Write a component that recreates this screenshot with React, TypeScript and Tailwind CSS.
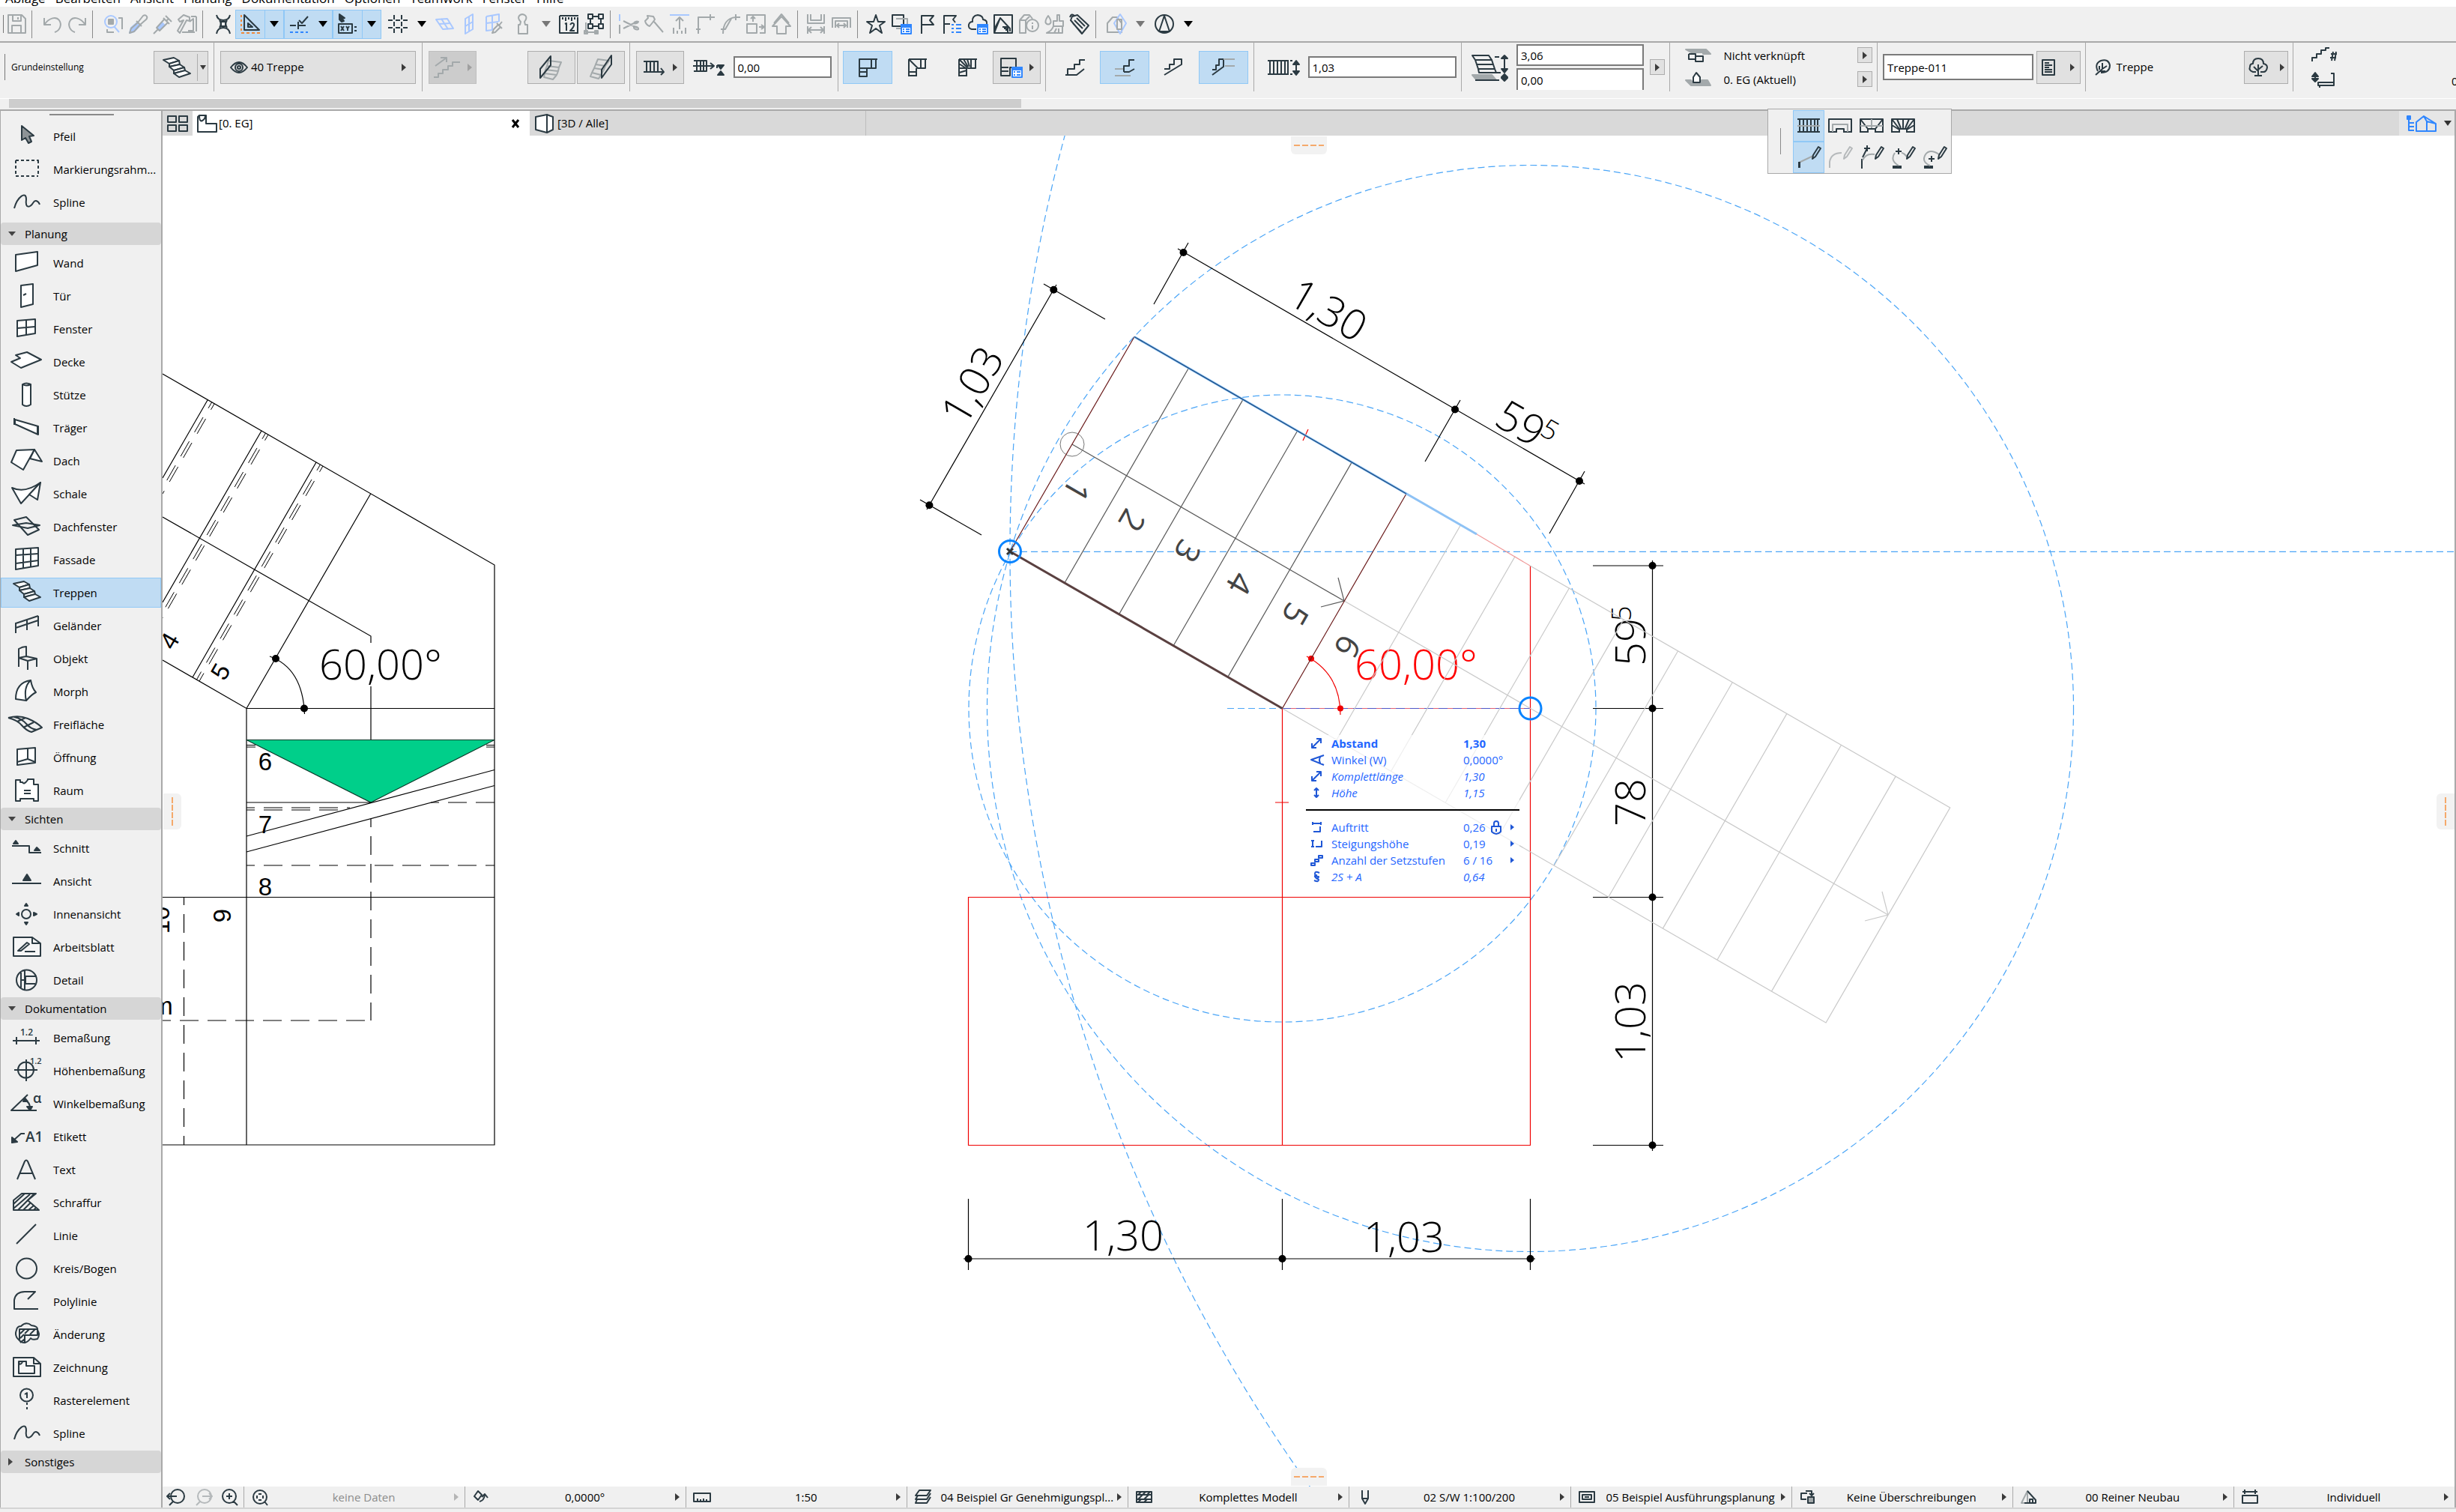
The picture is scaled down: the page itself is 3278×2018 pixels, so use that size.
import React from "react";

const DARK = "#2b3a42";
const GREY = "#a3a9ab";
const BLUE = "#2f86ff";
const PALE = "#a9c8ff";
const ORANGE = "#f08a3c";

type Layer = string | [string, string, string?];

function Icon({ d, w = 26, h = 26, sw = 2, color = DARK }: { d: Layer[]; w?: number; h?: number; sw?: number; color?: string }) {
  return (
    <svg width={w} height={h} viewBox={`0 0 ${w} ${h}`} className="block shrink-0 overflow-visible" aria-hidden="true">
      {d.map((l, i) =>
        typeof l === "string" ? (
          <path key={i} d={l} fill="none" stroke={color} strokeWidth={sw} strokeLinejoin="round" />
        ) : (
          <path key={i} d={l[0]} fill={l[2] ?? "none"} stroke={l[1]} strokeWidth={sw} strokeLinejoin="round" />
        )
      )}
    </svg>
  );
}

function Down({ color = "#000" }: { color?: string }) {
  return <Icon w={12} h={8} sw={0} d={[["M0 0H12L6 8Z", "none", color]]} />;
}
function Right({ color = "#3a3a3a" }: { color?: string }) {
  return <Icon w={6} h={10} sw={0} d={[["M0 0L6 5L0 10Z", "none", color]]} />;
}

/* ---------- menu ---------- */

const MENU = ["Ablage", "Bearbeiten", "Ansicht", "Planung", "Dokumentation", "Optionen", "Teamwork", "Fenster", "Hilfe"];

function MenuBar() {
  return (
    <nav className="flex h-[9px] shrink-0 items-end gap-[13px] overflow-hidden bg-white pl-[7px] text-[17px] leading-[22px]">
      {MENU.map((m) => (
        <button key={m} type="button" className="whitespace-nowrap">
          {m}
        </button>
      ))}
    </nav>
  );
}

/* ---------- toolbar ---------- */

function Sep({ tight }: { tight?: boolean }) {
  return <span className={tight ? "mr-[7px] ml-1 h-[37px] w-px shrink-0 bg-[#8a8a8a]" : "mr-[10px] ml-1 h-[37px] w-px shrink-0 bg-[#8a8a8a]"} />;
}

function Tool({ label, d, color, wide }: { label: string; d: Layer[]; color?: string; wide?: boolean }) {
  return (
    <button type="button" aria-label={label} className={wide ? "flex h-9 w-[34px] shrink-0 items-center justify-center" : "flex h-9 w-[33px] shrink-0 items-center justify-center"}>
      <Icon d={d} color={color} />
    </button>
  );
}

function Split({ label, d, on, caret, divided }: { label: string; d: Layer[]; on?: boolean; caret?: string; divided?: boolean }) {
  return (
    <div className={on ? "flex h-[39px] shrink-0 border border-[#90c8f6] bg-[#c0dcf3]" : "flex h-[39px] shrink-0 border border-transparent"}>
      <button type="button" aria-label={label} className="flex w-[38px] items-center justify-center">
        <Icon d={d} />
      </button>
      <button type="button" aria-label={`${label} Optionen`} className={divided ? "flex w-[25px] items-center justify-center border-l border-[#90c8f6]" : "flex w-[25px] items-center justify-center"}>
        <Down color={caret} />
      </button>
    </div>
  );
}

const LIST: Layer[] = [
  ["M13 14H26V26H13Z", BLUE, "#fff"],
  ["M13 14H26V17H13Z", BLUE, BLUE],
  ["M15 20H17M19 20H24M15 23H17M19 23H24", BLUE],
];

function Toolbar() {
  return (
    <div className="flex h-[48px] shrink-0 items-center overflow-hidden border-b-2 border-[#a9a9a9] bg-[#f0f0f0]">
      <span className="ml-1 h-6 w-px shrink-0 bg-[#777]" />
      <Tool label="Sichern" color={GREY} d={["M2 1H20L25 6V25H2Z", "M8 1V9H19V1", "M7 25V15H19V25", "M15 4V7"]} />
      <Sep />
      <Tool label="Widerrufen" color={GREY} d={["M2 5V14H11", "M2 14C9 4 18 3 22 8C26 14 23 22 16 24"]} />
      <Tool label="Wiederholen" color={GREY} d={["M24 5V14H15", "M24 14C17 4 8 3 4 8C0 14 3 22 10 24"]} />
      <Sep />
      <Tool label="Suchen und Aktivieren" color={GREY} d={[["M2 10A8 8 0 0 1 18 10A8 8 0 0 1 2 10M14 16L21 24", PALE], ["M7 7H13V13H7Z", GREY, GREY], "M20 5H25V20M5 20V24H14"]} />
      <Tool label="Parameter aufnehmen" color={GREY} d={[["M2 25L4 18L11 12L15 16L8 23Z", PALE, PALE], "M11 9L18 16M13 11L20 2Q23 0 25 3Q26 5 24 7L16 14M13 11L4 19L2 25L8 23L16 14"]} />
      <Tool label="Parameter übertragen" color={GREY} d={[["M6 18L12 11L16 15L9 21Z", PALE, PALE], "M17 2L25 10M14 5L22 13M21 6L18 9M15 7L5 18L9 22L20 11M7 20L1 26"]} />
      <Tool label="Favorit anwenden" color={GREY} d={["M1 7L8 1L16 4V9L12 8L3 25L0 22L8 8L3 10Z", "M18 3H25M25 3V23M6 24H23M16 10L21 6V22H14"]} />
      <Sep />
      <Tool label="Fangpunkte" d={["M4 1C5 6 8 8 13 8S21 6 22 1M4 26C5 20 8 18 13 18S21 20 22 26M8 8C10 11 10 15 8 18M18 8C16 11 16 15 18 18", "M10 10H16V16H10Z"]} />
      <Split label="Hilfslinien" on divided d={["M5 1V21H25Z", "M10 12V17H16Z", ["M1 1V4M1 7V10M1 13V16M1 19V22M1 25H5M8 25H12M15 25H19M22 25H26", ORANGE]]} />
      <Split label="Fanghilfen" on d={["M1 15H9M12 10V20M12 15H22M13 8L17 12L25 3", ["M1 24H5M8 24H12M15 24H19M22 24H25", BLUE]]} />
      <Split label="Koordinaten" on divided d={[["M2 0L9 5L6 6L8 9L5 10L2 7Z", DARK, DARK], "M1 13H19V25H1Z", "M4 16L8 22M8 16L4 22M11 16L13 19L15 16M13 19V22M22 17H25M22 22H25"]} />
      <span className="w-[2px] shrink-0" />
      <Split label="Raster" d={["M8 1V7M8 10V16M8 19V25M18 1V7M18 10V16M18 19V25M0 8H6M10 8H16M20 8H26M0 18H6M10 18H16M20 18H26"]} />
      <Tool label="Ebene" color={PALE} d={["M2 7L17 6L25 19L11 20Z", "M6 13L21 12M9 6L18 20"]} />
      <Tool label="Ebene vertikal" color={PALE} d={["M8 6L18 0V20L8 26Z", "M8 16L18 10M13 3V23"]} />
      <Tool label="Ebene aufnehmen" color={PALE} d={["M3 3L20 0V10M3 3V22L11 21M3 12L19 10M11 2V21", ["M11 25L13 20L19 14L22 17L15 24ZM17 12L24 19M20 15L24 10", GREY]]} />
      <span className="w-[2px] shrink-0" />
      <Split label="Schwerkraft" caret="#777" d={[["M8 26V14H10L11 10C6 5 8 1 13 0C19 1 20 5 16 10L17 14H20V26Z", GREY]]} />
      <Tool label="Maßstab" wide d={["M1 2H26M1 2V25H26M5 4V7M9 4V9M13 4V7M17 4V9M21 4V7M25 4V25", "M8 13L10 12V22M15 14Q18 10 20 13Q21 16 15 22H21"]} />
      <Tool label="Gruppieren" wide d={["M8 3H22V16H8Z", ["M5 0H11V6H5ZM19 0H25V6H19ZM5 13H11V19H5ZM19 13H25V19H19Z", DARK, "#f0f0f0"], ["M2 11V24H17M0 22H4V26H0ZM14 22H18V26H14Z", GREY]]} />
      <Sep tight />
      <Tool label="Trennen" wide color={GREY} d={[["M1 0V9", PALE], "M1 14V26M6 9L24 18M6 19L24 10M20 12A4 3 0 0 1 26 10A4 3 0 0 1 20 12M20 17A4 3 0 0 1 26 20A4 3 0 0 1 20 17"]} />
      <Tool label="Anpassen" wide color={GREY} d={["M1 9L5 5L4 2L12 3L14 7L11 11L7 16Q2 14 1 9ZM13 10L25 24"]} />
      <Tool label="Strecken" wide color={GREY} d={[["M0 1H26", PALE], "M13 20V4M8 9L13 4L18 9M5 18V26M10 22V26M16 22V26M21 18V26"]} />
      <Tool label="Verbinden" wide color={GREY} d={["M4 26V4H26M20 0V8M1 20H7"]} />
      <Tool label="Abrunden" wide color={GREY} d={["M3 26C3 14 8 5 20 4H26M20 0V8M0 20H6L14 6"]} />
      <Tool label="Skalieren" wide color={GREY} d={["M1 13H14V25H1Z", "M1 9V1H25V25H18M9 10V4M6 6L9 3L12 6M17 17H23M20 14L24 17L20 20"]} />
      <Tool label="Dach" wide color={GREY} d={["M1 16L13 3L25 16H19V26H7V16Z", "M3 12L13 0L23 12"]} />
      <Sep tight />
      <Tool label="Abstand" wide color={GREY} d={["M2 0V12H24V0M6 0V8H20V0M2 16V26M24 16V26M3 21H23M7 17L3 21L7 25M19 17L23 21L19 25"]} />
      <Tool label="Breite" wide color={GREY} d={["M1 18V5H25V18M5 18V9H21V18M7 15H19M10 12L7 15L10 18M16 12L19 15L16 18"]} />
      <Sep tight />
      <Tool label="Favoriten" wide d={["M13 1L16 10H25L18 15L21 25L13 19L5 25L8 15L1 10H10Z"]} />
      <Tool label="Geschosse" wide d={["M1 1H16V16H1Z", ["M6 6H21V19H6", GREY], ...LIST]} />
      <Tool label="Markierung" wide d={["M6 26V2H22L17 8L22 14H6"]} />
      <Tool label="Markierungsliste" wide d={["M2 26V2H18L14 7L17 11M2 13H10", ["M12 14H15M18 14H25M12 19H15M18 19H25M12 24H15M18 24H25", BLUE]]} />
      <Tool label="Cloud" wide d={["M11 20H5Q0 19 1 14Q2 10 6 10Q5 2 13 1Q20 2 20 7Q26 8 25 13", ...LIST]} />
      <Tool label="Ansicht" wide d={["M1 1H25V25H1Z", "M1 20L9 5L22 19V23M1 25L9 5M12 17H19V25M14 19H17V22"]} />
      <Tool label="Elementinfo" wide color={GREY} d={["M1 8L7 1H14L18 6M1 8V25H9V8ZM9 8L14 3", "M10 15A8 8 0 0 1 26 15A8 8 0 0 1 10 15M18 11V13M18 15V20"]} />
      <Tool label="Oberflächen" wide color={GREY} d={["M5 2Q10 9 8 12Q5 15 2 12Q0 9 5 2ZM17 1H20V9H25V16H12V9H17ZM12 16Q10 22 3 25H24V16M13 25L16 19M19 25V19"]} />
      <Tool label="Etiketten" wide d={["M1 8L3 3L10 1L25 15L16 26L1 8ZM6 8L17 19M9 5L20 16M4 12L15 24M0 4Q2 -2 6 2"]} />
      <Sep />
      <Tool label="Energie" wide color={GREY} d={["M1 12L8 4H14L20 12V24H1Z", ["M18 0L26 12L18 26L10 12Z", PALE], "M14 7H20V20H14Z"]} />
      <span className="flex w-[30px] justify-center">
        <Down color="#777" />
      </span>
      <Tool label="Modellprüfung" wide d={["M1 13A12 12 0 0 1 25 13A12 12 0 0 1 1 13M13 2L20 23H6Z"]} />
      <span className="flex w-[30px] justify-center">
        <Down />
      </span>
    </div>
  );
}

/* ---------- info box ---------- */

function Cell({ children, className = "" }: { children?: React.ReactNode; className?: string }) {
  return <div className={`flex h-[65px] min-w-0 items-center overflow-hidden border-l border-[#a9a9a9] ${className}`}>{children}</div>;
}

const BTN = "flex h-[44px] shrink-0 items-center justify-center border border-[#adadad] bg-[#e1e1e1]";
const BTN_ON = "flex h-[44px] w-[66px] shrink-0 items-center justify-center border border-[#90c8f6] bg-[#c0dcf3]";
const BTN_OFF = "flex h-[44px] w-[66px] shrink-0 items-center justify-center";
const FIELD = "border-2 border-[#7a7a7a] bg-white px-1 text-[15px] outline-none";

function SmallArrow({ label }: { label: string }) {
  return (
    <button type="button" aria-label={label} className="flex h-[21px] w-5 shrink-0 items-center justify-center border border-[#adadad] bg-[#e1e1e1]">
      <Right />
    </button>
  );
}

const STAIR: Layer[] = [
  ["M3 4L17 1L24 5L11 9Z", DARK, "#fff"],
  ["M11 9V13L25 10L24 5Z", DARK, "#fff"],
  ["M11 13L25 10L31 14L17 18Z", DARK, "#fff"],
  ["M17 18V22L32 18L31 14Z", DARK, "#fff"],
  ["M17 22L32 18L39 22L24 27Z", DARK, "#fff"],
];

function InfoBar() {
  return (
    <div className="shrink-0 border-b-2 border-[#a9a9a9] bg-[#f0f0f0]">
      <div className="flex h-[75px] items-start overflow-hidden border-b border-white">
        <div className="flex h-[65px] w-[285px] shrink-0 items-center justify-between pr-[7px]">
          <div className="flex items-center">
            <span className="ml-[6px] h-[35px] w-px bg-[#777]" />
            <span className="ml-2 text-[12px]">Grundeinstellung</span>
          </div>
          <button type="button" aria-label="Treppe Grundeinstellung" className={`${BTN} w-[73px]`}>
            <span className="flex flex-1 justify-center">
              <Icon w={40} h={28} d={STAIR} />
            </span>
            <span className="flex h-9 w-[14px] items-center justify-center border-l border-[#adadad]">
              <Icon w={8} h={6} sw={0} d={[["M0 0H8L4 6Z", "none", "#3a3a3a"]]} />
            </span>
          </button>
        </div>

        <div className="grid min-w-0 flex-1 grid-cols-10">
          <Cell className="px-2">
            <button type="button" className={`${BTN} w-full px-3`}>
              <Icon w={24} h={16} d={["M1 8Q12 -6 23 8Q12 22 1 8ZM7 8A5 5 0 0 1 17 8A5 5 0 0 1 7 8", "M10 8A2 2 0 0 1 14 8A2 2 0 0 1 10 8"]} />
              <span className="ml-1 flex-1 text-left text-[15px]">40 Treppe</span>
              <Right />
            </button>
          </Cell>

          <Cell className="justify-between pr-[6px] pl-2">
            <button type="button" disabled aria-label="Treppenrichtung" className="flex h-[44px] w-16 items-center justify-center gap-2 border border-[#bfbfbf] bg-[#cccccc]">
              <Icon w={38} h={28} color={GREY} d={["M1 27H7V22H13V17H20V12H26V7H36M3 12L18 1M10 1H18V7"]} />
              <Right color="#a0a0a0" />
            </button>
            <div className="flex gap-[2px]">
              <button type="button" aria-label="Wange links" className={`${BTN} w-16`}>
                <Icon w={32} h={34} color={GREY} d={["M12 8L29 10L26 17L10 15ZM10 15L8 20L25 22L26 17M8 20L7 25L23 27L25 22M7 25L6 30L18 33L23 27", ["M15 2V14L1 31V19Z", DARK]]} />
              </button>
              <button type="button" aria-label="Wange rechts" className={`${BTN} w-16`}>
                <Icon w={32} h={34} color={GREY} d={["M12 6L27 8L22 15L9 13ZM9 13L7 18L20 20L22 15M7 18L4 24L16 27L20 20M4 24L2 29L13 32L16 27", ["M30 1V13L17 31V20Z", DARK]]} />
              </button>
            </div>
          </Cell>

          <Cell className="justify-between pr-2 pl-2">
            <button type="button" aria-label="Bezugslinie" className={`${BTN} w-16 gap-[10px]`}>
              <Icon w={30} h={20} d={["M1 2H20V16M1 16H28M5 2V16M10 2V16M15 2V16M24 11L28 16L24 20"]} />
              <Right />
            </button>
            <Icon w={42} h={22} d={["M1 2H18V16H1M5 2V16M10 2V16M14 2V16M0 9H28M23 5L28 9L23 13M32 8V12", ["M33 8H41L37 13ZM33 21H41L37 16Z", DARK, DARK]]} />
            <input aria-label="Versatz" defaultValue="0,00" className={`${FIELD} h-[29px] w-[131px]`} />
          </Cell>

          <Cell className="justify-between pr-[6px] pl-[6px]">
            <button type="button" aria-label="Podest rechteckig" className={BTN_ON}>
              <Icon w={26} h={26} d={["M2 2H18V14H12V25H2ZM2 19H12M2 14H12M18 2V14H24V1M18 2H26"]} />
            </button>
            <button type="button" aria-label="Podest diagonal" className={BTN_OFF}>
              <Icon w={26} h={26} d={["M2 2H26M2 2L14 14H24V1M2 2V25M12 14V25M2 19H12M2 24H12M18 2V14"]} />
            </button>
            <button type="button" aria-label="Gewendelt" className={BTN_OFF}>
              <Icon w={26} h={26} d={["M2 2H26M2 2L14 14H24V1M2 2V25M12 14V25M2 20L12 17M2 14L12 14M2 8L11 14M8 2L14 12M13 2L16 12M18 2V14M2 24H12"]} />
            </button>
            <button type="button" aria-label="Wendelung Optionen" className={`${BTN} w-16 gap-[10px]`}>
              <Icon w={30} h={28} d={["M2 2H22V14H14V25H2ZM2 19H12M2 14H12M22 2V14", ["M17 14H30V27H17Z", BLUE, "#fff"], ["M17 14H30V17H17Z", BLUE, BLUE], ["M19 20H21M23 20H28M19 24H21M23 24H28", BLUE]]} />
              <Right />
            </button>
          </Cell>

          <Cell className="justify-between pr-[6px] pl-[6px]">
            <button type="button" aria-label="Anfang Tritt" className={BTN_OFF}>
              <Icon w={28} h={24} d={["M1 22H16L26 14M4 22V14H13V8H20V2H27"]} />
            </button>
            <button type="button" aria-label="Anfang Setzstufe" className={BTN_ON}>
              <Icon w={28} h={24} d={["M13 18H20L27 14M13 18V10H20V2H27", ["M1 14H12M1 23H22", GREY]]} />
            </button>
            <button type="button" aria-label="Ende Tritt" className={BTN_OFF}>
              <Icon w={28} h={24} d={["M1 22L24 8V1H14V8H8V14H1"]} />
            </button>
            <button type="button" aria-label="Ende Setzstufe" className={BTN_ON}>
              <Icon w={32} h={24} d={["M1 22L16 11V1H10V9H6V15H1M12 1H18", ["M16 1H31M18 10H31", GREY]]} />
            </button>
          </Cell>

          <Cell className="gap-3 pr-[6px] pl-[18px]">
            <Icon w={42} h={22} d={["M0 2H28M0 20H28M3 2V20M8 2V20M13 2V20M18 2V20M23 2V20M27 2V20M30 2H33M30 20H33", ["M38 5V18M34 7L38 2L42 7ZM34 16L38 21L42 16Z", DARK, DARK]]} />
            <input aria-label="Laufbreite" defaultValue="1,03" className={`${FIELD} h-[29px] min-w-0 flex-1`} />
          </Cell>

          <Cell className="pr-[6px] pl-3">
            <Icon w={50} h={36} d={["M2 2H24L28 8H6ZM6 8L8 14H30L28 8M8 14L10 20H32L30 14M10 20L11 25H34L32 20M32 4H38", ["M2 28H28L34 35H8Z", GREY, GREY], "M6 35H38M34 25H40", ["M45 4V22M41 6L45 2L49 6ZM41 20L45 25L49 20ZM45 28V33M41 31L45 27L49 31ZM41 32L45 36L49 32Z", DARK, DARK]]} />
            <div className="ml-[11px] flex h-[61px] min-w-0 flex-1 flex-col gap-[3px] overflow-hidden">
              <input aria-label="Höhe" defaultValue="3,06" className={`${FIELD} h-[29px] w-full shrink-0`} />
              <input aria-label="Basisversatz" defaultValue="0,00" className={`${FIELD} h-[31px] w-full shrink-0`} />
            </div>
            <span className="ml-2">
              <SmallArrow label="Höhenoptionen" />
            </span>
          </Cell>

          <Cell className="pr-[6px] pl-5">
            <div className="flex w-full flex-col gap-2 text-[15px] leading-6">
              <div className="flex items-center">
                <Icon w={34} h={18} d={[["M1 1H28L34 7H24V5H8Z", GREY, GREY], "M5 7H14V14H9M18 17H24V10H14V17H18M5 7V14H9"]} />
                <span className="ml-[18px] flex-1 truncate">Nicht verknüpft</span>
                <SmallArrow label="Verknüpfung" />
              </div>
              <div className="flex items-center">
                <Icon w={34} h={18} d={[["M1 10H8L12 15H22V10H30L34 17H8Z", GREY, GREY], ["M11 6L15 0L20 6V13H11Z", DARK, "#fff"]]} />
                <span className="ml-[18px] flex-1 truncate">0. EG (Aktuell)</span>
                <SmallArrow label="Ursprungsgeschoss" />
              </div>
            </div>
          </Cell>

          <Cell className="gap-1 pr-[6px] pl-[7px]">
            <input aria-label="ID" defaultValue="Treppe-011" className={`${FIELD} h-[35px] min-w-0 flex-1`} />
            <button type="button" aria-label="Klassifizierung" className={`${BTN} w-[59px] gap-5`}>
              <Icon w={18} h={22} d={["M1 1H17V21H1ZM4 5H10M4 8H14M4 11H10M4 14H14M4 17H14"]} />
              <Right />
            </button>
          </Cell>

          <Cell className="pr-[6px] pl-3">
            <Icon w={20} h={22} d={["M1 21L10 13M4 16Q-1 6 8 2Q18 -1 20 8Q20 18 8 18M10 13V5M10 13L16 9M7 16L14 16M6 14V9"]} />
            <span className="ml-[9px] flex-1 text-[15px]">Treppe</span>
            <button type="button" aria-label="Baumaterial" className={`${BTN} w-[59px] gap-4`}>
              <Icon w={26} h={25} d={["M10 19H6Q0 17 2 12Q2 8 6 8Q6 1 13 1Q20 1 20 8Q25 9 25 13Q24 19 20 19H16M13 24V9M13 18L7 12M13 16L19 11M8 24H18"]} />
              <Right />
            </button>
          </Cell>
        </div>

        <div className="flex h-[65px] w-[218px] shrink-0 items-center overflow-hidden border-l border-[#a9a9a9] pl-6">
          <div className="flex flex-col gap-[14px]">
            <Icon w={34} h={20} d={["M1 19V14H7V9H13V4H19V1H24M26 9H34M25 14H33M29 6L27 18M33 6L31 18"]} />
            <Icon w={34} h={20} d={["M9 13H30V17H9ZM30 13V1H26M11 17V20", ["M5 4V10M1 5L5 0L9 5ZM1 8L5 12L9 8Z", DARK, DARK]]} />
          </div>
          <span className="mt-9 ml-[153px] text-[15px] leading-6">0,26</span>
        </div>
      </div>
      <div className="h-[14px] px-3">
        <div className="h-3 w-[1351px] bg-[#cdcdcd]" />
      </div>
    </div>
  );
}

/* ---------- tool box ---------- */

const N = "#fff";
const BOX: { title?: string; items: [string, Layer[]][] }[] = [
  {
    items: [
      ["Pfeil", [["M14 2L30 15L24 16L27 23L23 25L19 18L14 21Z", DARK, "#8d9396"]]],
      ["Markierungsrahm...", ["M6 4H10M13 4H17M20 4H24M27 4H31M34 4H36V8M36 11V15M36 18V22M6 4V8M6 11V15M6 18V22M6 25H10M13 25H17M20 25H24M27 25H31M34 25H36"]],
      ["Spline", ["M4 24C8 9 20 0 20 12C18 26 26 22 29 17S36 14 38 19"]],
    ],
  },
  {
    title: "Planung",
    items: [
      ["Wand", [["M6 5L35 1V19L6 27Z", DARK, N]]],
      ["Tür", [["M13 2L29 0V27L13 31Z", DARK, N], "M16 15L20 13"]],
      ["Fenster", [["M8 5L32 3V22L8 26Z", DARK, N], "M20 4V24M8 15L32 13"]],
      ["Decke", [["M0 16L12 11L6 7L21 3L40 13L13 24Z", DARK, N]]],
      ["Stütze", [["M15 2Q20 -1 26 2V29Q20 33 15 29Z", DARK, N], "M15 2Q20 5 26 2"]],
      ["Träger", [["M5 5L36 14V25L5 11Z", DARK, N], "M4 3V12M33 24H37M35 13V25"]],
      ["Dach", [["M0 18L7 2L31 1L16 28Z", DARK, N], ["M31 1L41 17L25 13Z", DARK, N]]],
      ["Schale", [["M1 8Q18 16 39 1L13 29Z", DARK, N], ["M39 1L35 24L24 17Z", DARK, N]]],
      ["Dachfenster", ["M4 7L20 3L37 20L22 27Z", "M2 14L20 11L38 14L22 18Z"]],
      ["Fassade", [["M6 2L36 0V24L6 29Z", DARK, N], "M16 1V27M26 1V26M6 10L36 8M6 21L36 17"]],
      ["Treppen", STAIR],
      ["Geländer", ["M6 13L36 3M6 19L36 9M6 12V26M21 8V22M36 3V17"]],
      ["Objekt", ["M10 15V3Q15 0 20 0V13M10 15L20 13L34 16L22 19ZM10 15V27M22 19V31M34 16V27"]],
      ["Morph", [["M6 26Q6 4 26 1Q18 8 20 28Z", DARK, N], ["M26 1Q28 12 33 17Q27 20 20 28Q16 10 26 1Z", DARK, N]]],
      ["Freifläche", ["M-4 7Q10 3 22 8T41 20L27 26Q20 24 14 17T-4 7M8 12L19 7M16 20L30 13M4 6Q14 8 20 15T34 23"]],
      ["Öffnung", [["M8 5L32 3V23L8 26Z", DARK, N], "M22 4V18L32 22M8 22L22 18"]],
      ["Raum", [["M6 2H12V5H15Q17 9 22 2V1H30V8H36V30H30V27H12V30H6Z", DARK, N], "M17 16H26M17 20H26"]],
    ],
  },
  {
    title: "Sichten",
    items: [
      ["Schnitt", ["M1 13H24V22H40", ["M3 10L6 6L9 10ZM31 19L34 15L38 19Z", DARK, DARK]]],
      ["Ansicht", ["M1 19H40", ["M16 15L21 7L26 15Z", DARK, DARK]]],
      ["Innenansicht", ["M14 16A6 6 0 0 1 26 16A6 6 0 0 1 14 16", ["M18 5L20 2L22 5ZM18 27L20 30L22 27ZM10 14V18L7 16ZM30 14V18L34 16Z", DARK, DARK]]],
      ["Arbeitsblatt", [["M3 3H28L39 11V28H3Z", DARK, "#f6f6f6"], "M28 3V11H39M9 21L21 10L24 12L13 21ZM18 22H32"]],
      ["Detail", ["M7 16A13 13 0 0 1 34 16A13 13 0 0 1 7 16M13 6V26M18 3V29M34 11H19V21H32M19 16H14"]],
    ],
  },
  {
    title: "Dokumentation",
    items: [
      ["Bemaßung", ["M2 20H38M7 15V25M33 15V25"]],
      ["Höhenbemaßung", ["M9 15A10 10 0 0 1 30 15A10 10 0 0 1 9 15M4 15H35M20 1V30"]],
      ["Winkelbemaßung", ["M34 25H0L22 4", "M18 11Q25 14 25 22", ["M16 13L18 8L22 13ZM21 20H28L25 25Z", DARK, DARK]]],
      ["Etikett", ["M3 21L13 12H18", ["M1 24V17L8 23Z", DARK, DARK]]],
      ["Text", ["M8 29L18 5Q20 2 22 5L32 29M12 21H28"]],
      ["Schraffur", ["M3 26V13L14 4H33L22 13L37 26Z", "M3 18L18 4M3 24L25 5M9 26L30 5M16 26L26 16M23 26L30 20M30 26L33 23"]],
      ["Linie", ["M7 27L33 1"]],
      ["Kreis/Bogen", ["M7 16A13 13 0 0 1 34 16A13 13 0 0 1 7 16"]],
      ["Polylinie", ["M36 26H4V14Q6 3 18 3H32L22 13"]],
      ["Änderung", ["M10 23Q4 18 7 10Q8 5 13 5Q20 -2 27 4Q36 5 35 10Q39 16 35 22Q28 24 26 21Q18 32 10 23Z", "M11 23V9H35V17H18V28M12 15L18 9M18 15L24 9M25 16L32 9M12 21L17 16M12 27L18 22"]],
      ["Zeichnung", [["M3 3H30L39 11V28H3Z", DARK, "#f6f6f6"], "M30 3V11H39M10 8H20V14H31V24H10ZM10 8Q11 15 15 9"]],
      ["Rasterelement", ["M12 9A8 8 0 0 1 29 9A8 8 0 0 1 12 9M21 19V22M21 25V28M18 8L21 6V13"]],
      ["Spline", ["M4 24C8 9 20 0 20 12C18 26 26 22 29 17S36 14 38 19"]],
    ],
  },
  { title: "Sonstiges", items: [] },
];

const ICON_TEXT: Record<string, { t: string; x: number; y: number; s: number }> = {
  "Bemaßung": { t: "1.2", x: 12, y: 13, s: 12 },
  "Höhenbemaßung": { t: "1.2", x: 25, y: 7, s: 11 },
  "Winkelbemaßung": { t: "α", x: 29, y: 15, s: 18 },
  Etikett: { t: "A1", x: 19, y: 23, s: 19 },
};

function Toolbox() {
  return (
    <aside className="flex w-[217px] shrink-0 flex-col overflow-hidden border-r-2 border-l border-[#a9a9a9] bg-[#f0f0f0]">
      <span className="mt-1 mb-[6px] ml-[65px] h-[2px] w-[86px] shrink-0 bg-[#8a8a8a]" />
      {BOX.map((g, gi) => (
        <div key={gi} className={g.title ? "shrink-0" : "shrink-0 pb-1"}>
          {g.title && (
            <button type="button" aria-expanded={g.items.length > 0} className="mt-px mb-[2px] flex h-[30px] w-full items-center rounded-[4px] bg-[#d6d6d6] pl-[10px] text-[15px]">
              <span className="flex w-[22px]">
                {g.items.length ? <Icon w={10} h={6} sw={0} d={[["M0 0H10L5 6Z", "none", "#444"]]} /> : <Right color="#444" />}
              </span>
              {g.title}
            </button>
          )}
          {g.items.map(([name, d], i) => (
            <button
              key={i}
              type="button"
              aria-pressed={name === "Treppen"}
              className={
                name === "Treppen"
                  ? "my-[2px] flex h-10 w-full items-center border border-[#90c8f6] bg-[#c0dcf3] pl-[13px] text-[15px] whitespace-nowrap"
                  : "flex h-11 w-full items-center pl-[14px] text-[15px] whitespace-nowrap"
              }
            >
              <span className="relative">
                <Icon w={40} h={32} d={d} />
                {ICON_TEXT[name] && (
                  <svg width={40} height={32} className="absolute inset-0 overflow-visible" aria-hidden="true">
                    <text x={ICON_TEXT[name].x} y={ICON_TEXT[name].y} fontSize={ICON_TEXT[name].s} fill={DARK} className="font-semibold">
                      {ICON_TEXT[name].t}
                    </text>
                  </svg>
                )}
              </span>
              <span className="ml-4">{name}</span>
            </button>
          ))}
        </div>
      ))}
    </aside>
  );
}

/* ---------- tabs ---------- */

function TabBar() {
  return (
    <div className="flex h-[33px] shrink-0 items-stretch bg-[#d9d9d9] text-[15px]">
      <button type="button" aria-label="Übersicht" className="flex w-10 items-center justify-center">
        <Icon w={28} h={22} d={["M1 1H12V9H1ZM16 1H27V9H16ZM1 13H12V21H1ZM16 13H27V21H16Z"]} />
      </button>
      <div className="flex w-[450px] items-center bg-white pr-[14px] pl-[5px]">
        <Icon w={28} h={24} d={["M2 23V3L4 1H13V12H27V23ZM4 1Q4 10 8 8Q12 6 12 1"]} />
        <span className="ml-[2px] flex-1">[0. EG]</span>
        <button type="button" aria-label="Tab schließen">
          <Icon w={10} h={12} sw={3} color="#000" d={["M1 1L9 11M9 1L1 11"]} />
        </button>
      </div>
      <button type="button" className="flex w-[449px] items-center border-r border-[#bdbdbd] pl-[7px]">
        <Icon w={25} h={26} d={[["M1 4L16 1L24 4V21L16 25L1 21Z", DARK, "#fff"], "M16 1V25"]} />
        <span className="ml-[5px]">[3D / Alle]</span>
      </button>
      <div className="flex-1" />
      <button type="button" aria-label="Navigator" className="flex w-[74px] items-center justify-end gap-[10px] bg-[#e6e6e6] pr-1">
        <Icon w={40} h={24} color={BLUE} d={["M13 10L23 2L39 12V22H13ZM23 2L27 9V22M27 9L39 12M3 5V21H10M3 11H10M3 16H10", ["M1 2H5V6H1Z", BLUE, BLUE]]} />
        <Icon w={10} h={7} sw={0} d={[["M0 0H10L5 7Z", "none", "#333"]]} />
      </button>
    </div>
  );
}

/* ---------- drawing ---------- */

const GUIDE = { fill: "none", stroke: "#4aa5f7", strokeWidth: 1.2, strokeDasharray: "9 5" };

const ux = 165.7;
const uy = -287;
const sx = 72.6;
const sy = 41.9;

function Lines({ d, stroke = "#000", sw = 1.2, dash, offset }: { d: string; stroke?: string; sw?: number; dash?: string; offset?: number }) {
  return <path d={d} fill="none" stroke={stroke} strokeWidth={sw} strokeDasharray={dash} strokeDashoffset={offset} />;
}
function Dots({ p, r = 5, fill = "#000" }: { p: [number, number][]; r?: number; fill?: string }) {
  return (
    <>
      {p.map(([x, y], i) => (
        <circle key={i} cx={x} cy={y} r={r} fill={fill} />
      ))}
    </>
  );
}
function Label({ x, y, r = 0, size = 56, fill = "#000", anchor = "middle", children }: { x: number; y: number; r?: number; size?: number; fill?: string; anchor?: "start" | "middle"; children: React.ReactNode }) {
  return (
    <text transform={`translate(${x} ${y}) rotate(${r})`} fontSize={size} fill={fill} textAnchor={anchor} className="font-light">
      {children}
    </text>
  );
}

function ExistingStair() {
  return (
    <g>
      <Lines d="M217 499L660 754V1528H217M217 881L329 945.5L495 658.5M217 690L495 849V858M495 916V987M329 945.5H660M329 945.5V1528M217 1197.5H660" />
      <Lines d="M422 617L257 904M349 575L217 804M277 534L217 638" />
      <Lines sw={1} dash="23 14" offset={14} d="M427.500 620L262.500 907M431 622L266 909M354.500 578L217 817M358 580L217 825M282.500 537L217 651M286 539L217 659" />
      <path d="M329 987.5H660L495 1071Z" fill="#00cf8a" stroke="#0b3b2b" strokeWidth={1.2} />
      <Lines d="M329 994.5H341M329 997H341M649 994.5H660M649 997H660M329 1071H495M329 1116L660 1027.5M329 1137L660 1048.5" />
      <Lines dash="25 12" offset={14} d="M329 1078H467M329 1081H455M575 1071H660M329 1155H660M245.5 1197V1528M495 1093V1362M217 1362H495" />
      <Lines d="M360 876Q404 892 406.500 953" />
      <Dots p={[[368, 879], [406, 945.5]]} />
      <Label x={508} y={907}>60,00°</Label>
      <g fontSize={33} textAnchor="middle" className="font-['Liberation_Sans',sans-serif]">
        <text x={354} y={1028}>6</text>
        <text x={354} y={1112}>7</text>
        <text x={354} y={1195}>8</text>
        <text transform="translate(304 902) rotate(-60)">5</text>
        <text transform="translate(236 861) rotate(-60)">4</text>
        <text transform="translate(308 1222) rotate(-90)">9</text>
        <text transform="translate(226 1228) rotate(-90)">10</text>
        <text x={217} y={1354}>m</text>
      </g>
    </g>
  );
}

function Drawing() {
  const risers = [1, 2, 3, 4].map((i) => `M${1348.2 + sx * i} ${736.3 + sy * i}l${ux} ${uy}`).join("");
  const ghosts = Array.from({ length: 10 }, (_, k) => k + 6).map((i) => `M${1348.2 + sx * i} ${736.3 + sy * i}l${ux} ${uy}`).join("");
  const numbers: [number, number][] = [[1437, 655], [1511, 695], [1585, 736], [1655, 779], [1729, 820], [1799, 863]];
  return (
    <svg className="absolute inset-0 block h-full w-full" role="img" aria-label="Grundriss Treppe">
      <g transform="translate(-217 -181)">
        <ExistingStair />

        <circle cx={1711.5} cy={945.5} r={418.5} {...GUIDE} />
        <circle cx={2042.5} cy={945.5} r={725} {...GUIDE} />
        <circle cx={3493} cy={736.3} r={2145} {...GUIDE} />
        <path d="M1348 736.3H5000M1638 945.5H1711" {...GUIDE} />

        <Lines d="M1292.500 1600V1695M1711.500 1600V1695M2042.500 1600V1695M1286 1680H2049" />
        <Dots p={[[1292.5, 1680], [1711.5, 1680], [2042.5, 1680]]} />
        <Label x={1499} y={1669}>1,30</Label>
        <Label x={1874} y={1671}>1,03</Label>

        <Lines d="M2205.500 748V1536M2126 755H2220M2126 945.5H2220M2126 1197.5H2220M2126 1528.500H2220" />
        <Dots p={[[2205.5, 755], [2205.5, 945.5], [2205.5, 1197.5], [2205.5, 1528.5]]} />
        <Label x={2196} y={1071} r={-90}>78</Label>
        <Label x={2196} y={1364} r={-90}>1,03</Label>
        <g transform="translate(2196 889) rotate(-90)">
          <Label x={0} y={0} anchor="start">59</Label>
          <Label x={60} y={-19} size={36} anchor="start">5</Label>
        </g>

        <Lines d="M1572 332L2115 646M1586 324L1540 406M1949 534L1902 616M2115 629L2068 712M1410 380L1237 680M1393 379L1475 426M1228 667L1310 714" />
        <Dots p={[[1579.5, 337], [1942, 546.5], [2108, 642], [1406.3, 386.7], [1240.4, 674.2]]} />
        <Label x={1763} y={431} r={30}>1,30</Label>
        <Label x={1315} y={524} r={-60}>1,03</Label>
        <g transform="translate(1992 566) rotate(30)">
          <Label x={0} y={0} anchor="start">59</Label>
          <Label x={60} y={-19} size={36} anchor="start">5</Label>
        </g>

        <Lines stroke="#f00000" d="M1292.500 1197.500H2042.500V1528.500H1292.500ZM1711.500 945.500V1528.500M2042.500 755V1197.500M1702 1071H1720M1746 573L1739 588" />
        <Lines stroke="#e06070" d="M1711 945.500H2042" />
        <Lines stroke="#5058c8" dash="12 7" d="M1711 945.500H2042" />
        <Lines stroke="#f00000" d="M1744 876Q1789 900 1789 954" />
        <Dots p={[[1750, 879], [1789, 945.5]]} r={4} fill="#f00000" />
        <Label x={1890} y={907} fill="#ff0000">60,00°</Label>

        <Lines stroke="#c9c9c9" d={`${ghosts}M1711.500 945.500L2437 1365L2602.700 1078L2042 755M1794 802L2520 1221M2512 1190L2520 1221L2489 1229`} />
        <Lines stroke="#5a5a5a" d={`${risers}M1431 593L1794 802M1786 771L1794 802L1763 810`} />
        <circle cx={1431} cy={593} r={16} fill="none" stroke="#777" />
        <Lines stroke="#6a1a1a" d="M1348 736L1514 449.500M1711.500 945.500L1877 659" />
        <Lines stroke="#5a4040" sw={3} d="M1348 736L1711.500 945.500" />
        <Lines stroke="#8ec2f5" sw={3} d="M1514 449.500L1971 713" />
        <Lines stroke="#1c4f86" sw={1.4} d="M1514 449.500L1877 659" />
        <Lines stroke="#f09a9a" d="M1971 713L2042 755" />
        <g fontSize={44} fill="#444" textAnchor="middle">
          {numbers.map(([x, y], i) => (
            <text key={i} transform={`translate(${x} ${y}) rotate(120)`} y={16}>
              {i + 1}
            </text>
          ))}
        </g>
        <circle cx={1348} cy={736} r={14.5} fill="none" stroke="#0a84ff" strokeWidth={3} />
        <circle cx={2042.5} cy={945.5} r={14.5} fill="none" stroke="#0a84ff" strokeWidth={3} />
        <Lines stroke="#333" sw={3} d="M1344 732L1352 740M1352 732L1344 740" />
      </g>
    </svg>
  );
}

/* ---------- tracker ---------- */

const TB = "#1f57d6";
const ROWS: { icon: Layer[]; label: string; value: string; cls?: string; more?: boolean; lock?: boolean; rule?: boolean }[] = [
  { icon: ["M1 13L13 1M7 1H13V7M1 7V13H7"], label: "Abstand", value: "1,30", cls: "font-bold" },
  { icon: ["M17 1L0 7L17 14M13 2Q9 7 13 13"], label: "Winkel (W)", value: "0,0000°" },
  { icon: ["M1 13L13 1M7 1H13V7M1 7V13H7"], label: "Komplettlänge", value: "1,30", cls: "italic" },
  { icon: ["M7 1V13M4 4L7 1L10 4M4 10L7 13L10 10"], label: "Höhe", value: "1,15", cls: "italic" },
  { icon: ["M2 2H13M2 0V4M13 0V4M3 13H12V6"], label: "Auftritt", value: "0,26", more: true, lock: true, rule: true },
  { icon: ["M2 3V11M0 3H4M0 11H4M6 11H14V3"], label: "Steigungshöhe", value: "0,19", more: true },
  { icon: ["M0 11H5V14H0ZM5 6H10V9H5ZM10 1H15V4H10Z"], label: "Anzahl der Setzstufen", value: "6 / 16", more: true },
  { icon: ["M11 2Q5 -1 5 3T10 7Q10 10 6 9M8 5Q4 5 5 7T10 11Q10 15 4 12"], label: "2S + A", value: "0,64", cls: "italic" },
];

function Tracker() {
  return (
    <table className="absolute top-[800px] left-[1526px] w-[285px] table-fixed border-collapse bg-white/70 text-[15px] leading-[22px] text-[#1f66ff]">
      <tbody>
        {ROWS.map((r, i) => (
          <React.Fragment key={i}>
            {r.rule && (
              <tr aria-hidden="true">
                <td colSpan={3} className="h-[24px] p-0">
                  <div className="h-[2px] bg-black" />
                </td>
              </tr>
            )}
            <tr className={r.cls}>
              <td className="w-[34px] py-0 pr-0 pl-[7px]">
                <Icon w={15} h={15} color={TB} d={r.icon} />
              </td>
              <td className="p-0 whitespace-nowrap">{r.label}</td>
              <td className="w-[75px] p-0 whitespace-nowrap">
                <div className="flex items-center">
                  <span className="w-[37px] shrink-0">{r.value}</span>
                  <span className="w-[26px] shrink-0">{r.lock && <Icon w={14} h={18} color={TB} d={["M1 8H13V15Q10 18 7 18T1 15ZM4 8V4Q4 1 7 1T10 4V8M7 11V15"]} />}</span>
                  {r.more && <Icon w={5} h={8} sw={0} d={[["M0 0L5 4L0 8Z", "none", TB]]} />}
                </div>
              </td>
            </tr>
          </React.Fragment>
        ))}
      </tbody>
    </table>
  );
}

function Handle({ className, vertical }: { className: string; vertical?: boolean }) {
  return (
    <div className={`absolute flex items-center justify-center bg-[#f2f2f2] ${className}`}>
      {vertical ? (
        <svg width={2} height={38}><path d="M1 0V38" stroke="#f5a96b" strokeWidth={2} strokeDasharray="8 2" /></svg>
      ) : (
        <svg width={40} height={2}><path d="M0 1H40" stroke="#f5a96b" strokeWidth={2} strokeDasharray="8 3" /></svg>
      )}
    </div>
  );
}

/* ---------- geometry palette ---------- */

const pen = "M22 13L29 2L32 4L25 15L21 18Z";
const PAL: { label: string; d: Layer[]; on?: boolean; light?: boolean }[][] = [
  [
    { label: "Gerader Lauf", on: true, d: ["M1 7H31M1 24H31M4 7V24M9 7V24M14 7V24M19 7V24M24 7V24M28 7V24", ["M1 16H31", GREY]] },
    { label: "Podest", d: ["M1 25V7H31V25M11 25V20H21V25M1 24H11M21 24H31", ["M6 24V14H26V24", GREY]] },
    { label: "Podest geteilt", d: ["M1 25V7H31V25M1 7L11 20V25M31 7L21 20V25M11 20H21M1 24H11M21 24H31", ["M16 7V19M1 16H31", GREY]] },
    { label: "Gewendelt", d: ["M1 25V7H31V25M1 7L11 20V25M31 7L21 20V25M11 20H21M16 7V19M8 7L13 19M24 7L19 19M1 15L11 21M31 15L21 21M1 24H11M21 24H31"] },
  ],
  [
    { label: "Gerade Strecke", on: true, d: [["M3 23L22 14", GREY], "M3 22V30M4 22V30", pen] },
    { label: "Tangente", light: true, d: ["M2 30V22Q4 10 18 10", pen] },
    { label: "Tangentenbogen", d: ["M3 18V31M4 16L10 4M10 0V8M6 4H14", ["M4 20Q8 10 20 12", GREY], pen] },
    { label: "Dreipunktbogen", d: ["M2 30H14M2 28H14", ["M10 27Q-2 20 5 10M14 10Q17 10 22 16", GREY], "M10 4V12M6 8H14", pen] },
    { label: "Mittelpunktbogen", d: ["M2 30H14M2 28H14", ["M10 27Q-2 22 4 12Q10 4 22 12", GREY], "M12 14V22M8 18H16", pen] },
  ],
];

function Palette() {
  return (
    <div className="absolute -top-[3px] right-[673px] flex h-[87px] w-[246px] items-center border border-[#a9a9a9] bg-[#f0f0f0]">
      <span className="mx-4 h-[35px] w-px bg-[#8a8a8a]" />
      <div className="flex flex-col">
        {PAL.map((row, r) => (
          <div key={r} className="flex">
            {row.map((p) => (
              <button key={p.label} type="button" aria-label={p.label} className={p.on ? "flex size-[42px] items-center justify-center border border-[#90c8f6] bg-[#c0dcf3]" : "flex size-[42px] items-center justify-center"}>
                <Icon w={32} h={32} d={p.d} color={p.light ? "#b5b9bb" : DARK} />
              </button>
            ))}
          </div>
        ))}
      </div>
    </div>
  );
}

/* ---------- status bar ---------- */

const LENS = "M5 10A9 9 0 0 1 23 10A9 9 0 0 1 5 10M8 17L3 22";
const STATUS: { label: string; d: Layer[]; muted?: boolean }[] = [
  { label: "keine Daten", d: ["M3 11A9 9 0 0 1 21 11A9 9 0 0 1 3 11M18 17L22 22M8 9V13M16 9V13M10 7H14M10 15H14"], muted: true },
  { label: "0,0000°", d: ["M3 10L8 3L13 8L8 15ZM10 17Q16 16 17 8M13 11L17 7L21 12"] },
  { label: "1:50", d: ["M1 6H23V17H1ZM6 17V13M10 17V14M14 17V13M18 17V14"] },
  { label: "04 Beispiel Gr Genehmigungspl...", d: ["M7 2H22L17 9H2ZM5 9L2 14H17L22 6M4 14L2 19H17L22 11"] },
  { label: "Komplettes Modell", d: ["M2 4H22V18H2ZM2 8H22M2 14H22M4 8L8 4M10 8L14 4M16 8L20 4M4 14L10 8M12 14L18 8M4 18L8 14M12 18L16 14"] },
  { label: "02 S/W 1:100/200", d: ["M8 2V13L12 20L16 13V2M8 13H16"] },
  { label: "05 Beispiel Ausführungsplanung", d: ["M2 4H22V18H2ZM6 8H18V14H6ZM9 11H15"] },
  { label: "Keine Überschreibungen", d: ["M10 14H3V6H11M9 3H17V8M14 6L17 9L20 6", ["M12 11H20V19H12Z", DARK, GREY]] },
  { label: "00 Reiner Neubau", d: [["M2 19L10 3V19Z", GREY], "M10 3L21 15V19H6M13 19V14H17V19"] },
  { label: "Individuell", d: ["M2 9H22V19H2ZM2 4H22M5 1V7M19 1V7"] },
];

function StatusBar() {
  return (
    <div className="flex h-7 shrink-0 items-stretch bg-[#f0f0f0] text-[15px]">
      <div className="flex w-[108px] shrink-0 items-center justify-around">
        <button type="button" aria-label="Vorheriger Zoom"><Icon w={24} h={23} d={[LENS, "M0 10H13M4 6L0 10L4 14"]} /></button>
        <button type="button" aria-label="Nächster Zoom"><Icon w={24} h={23} color="#b5b9bb" d={[LENS, "M11 10H24M20 6L24 10L20 14"]} /></button>
        <button type="button" aria-label="Vergrößern"><Icon w={24} h={23} d={["M2 10A9 9 0 0 1 20 10A9 9 0 0 1 2 10M17 17L22 22M11 6V14M7 10H15"]} /></button>
      </div>
      {STATUS.map((s) => (
        <button key={s.label} type="button" className="flex min-w-0 flex-1 items-center border-l border-[#a9a9a9] pr-2 pl-[9px]">
          <Icon w={24} h={22} d={s.d} />
          <span className={s.muted ? "ml-[6px] min-w-0 flex-1 truncate text-center text-[#8c8c8c]" : "ml-[6px] min-w-0 flex-1 truncate text-center"}>{s.label}</span>
          <Right color={s.muted ? "#b5b5b5" : undefined} />
        </button>
      ))}
    </div>
  );
}

export default function App() {
  return (
    <div className="flex h-screen w-full flex-col overflow-hidden bg-[#f0f0f0] font-['Open_Sans','Noto_Sans',sans-serif] text-black">
      <MenuBar />
      <Toolbar />
      <InfoBar />
      <div className="relative flex min-h-0 flex-1 border-b-2 border-[#d4d4d4]">
        <Toolbox />
        <div className="flex min-w-0 flex-1 flex-col border-r-2 border-[#a9a9a9]">
          <TabBar />
          <main className="relative min-h-0 flex-1 overflow-hidden bg-white">
            <Drawing />
            <Tracker />
            <Handle className="top-px left-1/2 h-6 w-12 -translate-x-1/2 rounded-b-md" />
            <Handle className="bottom-px left-1/2 h-6 w-12 -translate-x-1/2 rounded-t-md" />
            <Handle vertical className="top-1/2 left-px h-12 w-6 -translate-y-1/2 rounded-r-md" />
            <Handle vertical className="top-1/2 right-0 h-12 w-6 -translate-y-1/2 rounded-l-md" />
          </main>
          <StatusBar />
        </div>
        <Palette />
      </div>
      <div className="h-1 shrink-0" />
    </div>
  );
}
